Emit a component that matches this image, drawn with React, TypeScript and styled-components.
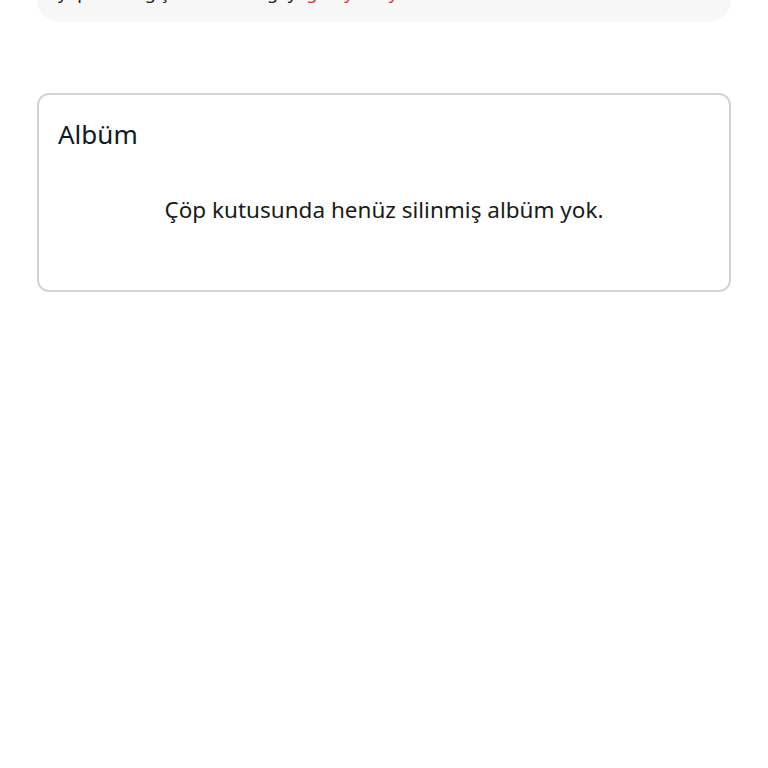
import React from "react";
import styled, { createGlobalStyle } from "styled-components";

const GlobalStyle = createGlobalStyle`
  body {
    margin: 0;
    background: #ffffff;
    font-family: "Noto Sans", "Open Sans", sans-serif;
  }
`;

const Page = styled.main`
  padding: 0 37px;
  overflow: hidden;
`;

const InfoPanel = styled.section`
  background: #f7f7f7;
  border-radius: 0 0 22px 22px;
  margin-top: -40px;
  padding: 20px 21px 18px;
  font-size: 18px;
  line-height: 24px;
  color: #222;
`;

const Link = styled.span`
  color: #e0314b;
`;

const Card = styled.section`
  margin-top: 71px;
  border: 2px solid #d2d4d6;
  border-radius: 12px;
  padding: 21px 19px 65px;
`;

const CardTitle = styled.h2`
  margin: 0;
  font-size: 26px;
  line-height: 36px;
  font-weight: 400;
  color: #0e1a24;
`;

const EmptyText = styled.p`
  margin: 43px 0 0;
  text-align: center;
  font-size: 22.5px;
  line-height: 30px;
  color: #1a1a1a;
`;

export default function App() {
  return (
    <>
      <GlobalStyle />
      <Page>
        <InfoPanel>
          yapılan değişiklikler bu öğeyi <Link>geri yükleyin</Link>
        </InfoPanel>
        <Card>
          <CardTitle>Albüm</CardTitle>
          <EmptyText>Çöp kutusunda henüz silinmiş albüm yok.</EmptyText>
        </Card>
      </Page>
    </>
  );
}
